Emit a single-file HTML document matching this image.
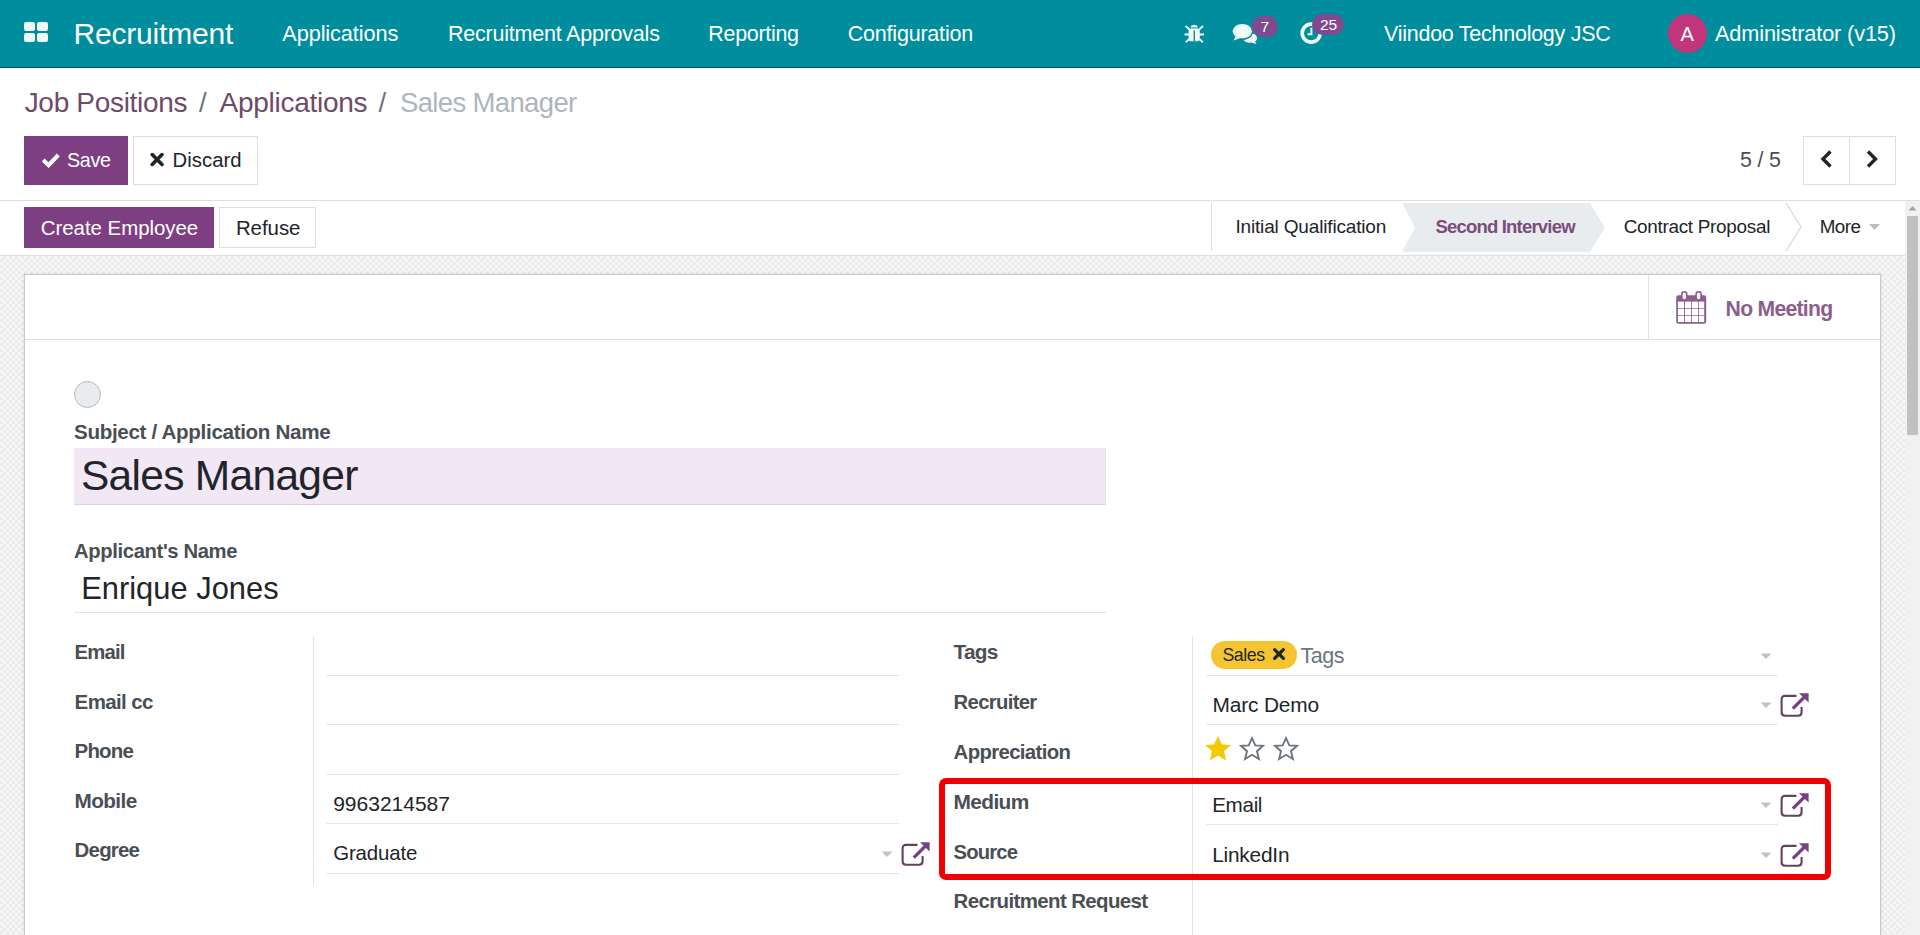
<!DOCTYPE html>
<html><head><meta charset="utf-8"><title>Recruitment - Sales Manager</title>
<style>
html,body{margin:0;padding:0;}
body{width:1920px;height:935px;overflow:hidden;position:relative;background:#fff;font-family:"Liberation Sans",sans-serif;}
.t{position:absolute;white-space:nowrap;line-height:1;}
svg{display:block;}
</style></head><body>
<div style="position:absolute;left:0px;top:0px;width:1920px;height:68px;background:#008d9e;"></div>
<div style="position:absolute;left:0px;top:67px;width:1920px;height:1px;background:#065b65;"></div>
<div style="position:absolute;left:24px;top:22px;width:11px;height:9px;background:#eef6f6;border-radius:2px;"></div>
<div style="position:absolute;left:37px;top:22px;width:11px;height:9px;background:#eef6f6;border-radius:2px;"></div>
<div style="position:absolute;left:24px;top:33px;width:11px;height:9px;background:#eef6f6;border-radius:2px;"></div>
<div style="position:absolute;left:37px;top:33px;width:11px;height:9px;background:#eef6f6;border-radius:2px;"></div>
<div class="t" style="left:73.50px;top:17px;line-height:33px;font-size:30.02px;color:#ffffff;letter-spacing:-0.192px;">Recruitment</div>
<div class="t" style="left:282.30px;top:21px;line-height:25px;font-size:21.73px;color:#ffffff;letter-spacing:-0.104px;">Applications</div>
<div class="t" style="left:448.00px;top:22px;line-height:24px;font-size:21.51px;color:#ffffff;letter-spacing:-0.220px;">Recruitment Approvals</div>
<div class="t" style="left:708.30px;top:22px;line-height:24px;font-size:21.44px;color:#ffffff;letter-spacing:-0.278px;">Reporting</div>
<div class="t" style="left:847.70px;top:22px;line-height:24px;font-size:21.53px;color:#ffffff;letter-spacing:-0.208px;">Configuration</div>
<div class="t" style="left:1384.00px;top:22px;line-height:24px;font-size:21.48px;color:#ffffff;letter-spacing:-0.242px;">Viindoo Technology JSC</div>
<div class="t" style="left:1715.00px;top:21px;line-height:25px;font-size:21.69px;color:#ffffff;letter-spacing:-0.121px;">Administrator (v15)</div>
<div style="position:absolute;left:1668px;top:14px;width:39px;height:39px;background:#c2357a;border-radius:50%;"></div>
<div class="t" style="left:1680.50px;top:23px;line-height:22px;font-size:20.15px;color:#ffffff;">A</div>
<svg style="position:absolute;left:1184px;top:23px" width="21" height="20" viewBox="0 0 21 20">
<g fill="#effafa"><path d="M6.2 4.5 A4.2 3.8 0 0 1 14.2 4.5 Z"/><rect x="4.6" y="5.4" width="11.2" height="12.9" rx="2.6"/>
<rect x="0.6" y="10.4" width="19.4" height="2.1"/></g>
<g stroke="#effafa" stroke-width="1.9" fill="none"><path d="M1.6 3 L5.6 6.8"/><path d="M19 3 L15 6.8"/><path d="M1.8 19.2 L5.6 15.6"/><path d="M18.8 19.2 L15 15.6"/></g>
<rect x="9.6" y="7.4" width="1.3" height="10.6" fill="#0f7884"/>
</svg>
<svg style="position:absolute;left:1232px;top:23px" width="27" height="22" viewBox="0 0 27 22">
<g fill="#effafa">
<path d="M17 12.5 Q22 9 24.5 13 Q26 16.5 23 18.5 L24.6 21 L19 19.6 Q14 20.5 11.5 17 Z"/>
</g>
<path d="M8.5 16.4 Q17.5 16.5 20.2 10.5" stroke="#0f7884" stroke-width="1.4" fill="none"/>
<g fill="#effafa">
<ellipse cx="10.3" cy="8.2" rx="9.6" ry="7.3"/><path d="M3.5 13 L1.8 17.6 L8.5 15 Z"/>
</g>
</svg>
<svg style="position:absolute;left:1300px;top:22px" width="23" height="23" viewBox="0 0 23 23">
<circle cx="11.2" cy="11.1" r="9" stroke="#effafa" stroke-width="3.6" fill="none"/>
<path d="M11.4 5.8 V12.2 H7.6" stroke="#effafa" stroke-width="2" fill="none"/>
</svg>
<div style="position:absolute;left:1251.5px;top:15.5px;width:26px;height:21px;background:#7f4a8f;border-radius:11px;"></div>
<div class="t" style="left:1260.60px;top:18px;line-height:17px;font-size:15.50px;color:#ffffff;">7</div>
<div style="position:absolute;left:1312px;top:14.3px;width:32px;height:21px;background:#7f4a8f;border-radius:11px;"></div>
<div class="t" style="left:1320.00px;top:16px;line-height:17px;font-size:15.50px;color:#ffffff;">25</div>
<div style="position:absolute;left:0px;top:68px;width:1920px;height:133px;background:#fff;"></div>
<div style="position:absolute;left:0px;top:200px;width:1920px;height:1px;background:#dedede;"></div>
<div class="t" style="left:24.70px;top:87px;line-height:31px;font-size:28.00px;color:#6f4a69;letter-spacing:-0.315px;">Job Positions</div>
<div class="t" style="left:199.00px;top:87px;line-height:31px;font-size:27.50px;color:#6c757d;">/</div>
<div class="t" style="left:219.50px;top:87px;line-height:31px;font-size:28.05px;color:#6f4a69;letter-spacing:-0.288px;">Applications</div>
<div class="t" style="left:378.60px;top:87px;line-height:31px;font-size:27.50px;color:#6c757d;">/</div>
<div class="t" style="left:400.00px;top:87px;line-height:31px;font-size:27.49px;color:#adb5bd;letter-spacing:-0.640px;">Sales Manager</div>
<div style="position:absolute;left:24px;top:136px;width:104px;height:49px;background:#7e3f82;"></div>
<svg style="position:absolute;left:41px;top:152px" width="20" height="16" viewBox="0 0 20 16"><path d="M2.2 8 L7.6 13.2 L17.3 3" stroke="#fff" stroke-width="4" fill="none" stroke-linejoin="miter"/></svg>
<div class="t" style="left:67.00px;top:149px;line-height:22px;font-size:19.75px;color:#ffffff;letter-spacing:-0.344px;">Save</div>
<div style="position:absolute;left:133px;top:136px;width:125px;height:49px;background:#fff;border:1px solid #dedede;box-sizing:border-box;"></div>
<svg style="position:absolute;left:150px;top:152px" width="15" height="15" viewBox="0 0 15 15"><path d="M2.2 2.6 L12 12.4 M12 2.6 L2.2 12.4" stroke="#1f2327" stroke-width="3.6" stroke-linecap="round" fill="none"/></svg>
<div class="t" style="left:172.50px;top:149px;line-height:22px;font-size:20.31px;color:#212529;letter-spacing:0.059px;">Discard</div>
<div class="t" style="left:1740.00px;top:148px;line-height:24px;font-size:21.44px;color:#4a4f54;letter-spacing:-0.176px;">5 / 5</div>
<div style="position:absolute;left:1803px;top:136px;width:93px;height:49px;background:#fff;border:1px solid #dedede;box-sizing:border-box;"></div>
<div style="position:absolute;left:1849px;top:136px;width:1px;height:49px;background:#dedede;"></div>
<svg style="position:absolute;left:1819px;top:149px" width="16" height="20" viewBox="0 0 16 20"><path d="M11.5 2.5 L4 10 L11.5 17.5" stroke="#212529" stroke-width="3.4" fill="none"/></svg>
<svg style="position:absolute;left:1864px;top:149px" width="16" height="20" viewBox="0 0 16 20"><path d="M4 2.5 L11.5 10 L4 17.5" stroke="#212529" stroke-width="3.4" fill="none"/></svg>
<div style="position:absolute;left:0px;top:201px;width:1905px;height:54px;background:#fff;"></div>
<div style="position:absolute;left:0px;top:255px;width:1905px;height:1px;background:#dedede;"></div>
<div style="position:absolute;left:24px;top:207px;width:190px;height:41px;background:#7e3f82;"></div>
<div class="t" style="left:40.70px;top:216px;line-height:23px;font-size:20.45px;color:#ffffff;letter-spacing:-0.026px;">Create Employee</div>
<div style="position:absolute;left:219px;top:207px;width:97px;height:41px;background:#fff;border:1px solid #dedede;box-sizing:border-box;"></div>
<div class="t" style="left:235.90px;top:216px;line-height:23px;font-size:20.44px;color:#212529;letter-spacing:-0.037px;">Refuse</div>
<div style="position:absolute;left:1211px;top:203px;width:1px;height:48px;background:#dedede;"></div>
<div class="t" style="left:1235.40px;top:216px;line-height:21px;font-size:19.05px;color:#212529;letter-spacing:-0.174px;">Initial Qualification</div>
<svg style="position:absolute;left:1400px;top:203px" width="210" height="50" viewBox="0 0 210 50"><path d="M2 0 L190 0 L205 24.5 L190 49 L2 49 L15 24.5 Z" fill="#e9ecef"/></svg>
<div class="t" style="left:1435.40px;top:216px;line-height:21px;font-size:18.50px;color:#7a4d7c;font-weight:700;letter-spacing:-0.800px;">Second Interview</div>
<div class="t" style="left:1623.75px;top:216px;line-height:21px;font-size:18.90px;color:#212529;letter-spacing:-0.289px;">Contract Proposal</div>
<svg style="position:absolute;left:1780px;top:201px" width="30" height="54" viewBox="0 0 30 54"><path d="M6 2 L21 26 L6 50" stroke="#d5d9dd" stroke-width="1.3" fill="none"/></svg>
<div class="t" style="left:1819.70px;top:216px;line-height:21px;font-size:18.80px;color:#212529;letter-spacing:-0.518px;">More</div>
<svg style="position:absolute;left:1868px;top:223px" width="13" height="8" viewBox="0 0 13 8"><path d="M1 1 L12 1 L6.5 7 Z" fill="#b8bcc0"/></svg>
<div style="position:absolute;left:0px;top:256px;width:1905px;height:679px;background-color:#f1f1f1;background-image:repeating-conic-gradient(#eaeaea 0 25%, #f7f7f7 0 50%);background-size:6px 6px;"></div>
<div style="position:absolute;left:1905px;top:201px;width:15px;height:734px;background:#f1f1f1;"></div>
<div style="position:absolute;left:1907px;top:216px;width:11px;height:219px;background:#c1c1c1;"></div>
<svg style="position:absolute;left:1907px;top:204px" width="11" height="8" viewBox="0 0 11 8"><path d="M1.5 6.5 L5.5 2 L9.5 6.5 Z" fill="#a3a3a3"/></svg>
<div style="position:absolute;left:24px;top:274px;width:1857px;height:700px;background:#fff;border:1px solid #c9c9c9;box-sizing:border-box;box-shadow:0 0 3px rgba(0,0,0,0.12);"></div>
<div style="position:absolute;left:25px;top:339px;width:1855px;height:1px;background:#dcdcdc;"></div>
<div style="position:absolute;left:1648px;top:275px;width:1px;height:64px;background:#e2e2e2;"></div>
<svg style="position:absolute;left:1676px;top:290px" width="31" height="34" viewBox="0 0 31 34">
<rect x="0.2" y="5.3" width="30" height="28.4" rx="2.2" fill="#8b5e8e"/>
<g fill="#fff">
<rect x="1.9" y="11.6" width="6.1" height="6.6"/><rect x="8.9" y="11.6" width="6.2" height="6.6"/><rect x="15.9" y="11.6" width="6.3" height="6.6"/><rect x="23" y="11.6" width="5.2" height="6.6"/>
<rect x="1.9" y="18.9" width="6.1" height="6.2"/><rect x="8.9" y="18.9" width="6.2" height="6.2"/><rect x="15.9" y="18.9" width="6.3" height="6.2"/><rect x="23" y="18.9" width="5.2" height="6.2"/>
<rect x="1.9" y="25.8" width="6.1" height="6.2"/><rect x="8.9" y="25.8" width="6.2" height="6.2"/><rect x="15.9" y="25.8" width="6.3" height="6.2"/><rect x="23" y="25.8" width="5.2" height="6.2"/>
</g>
<rect x="5.8" y="1.8" width="5" height="8.2" rx="2.5" fill="#fff" stroke="#8b5e8e" stroke-width="1.6"/>
<rect x="20.1" y="1.8" width="5" height="8.2" rx="2.5" fill="#fff" stroke="#8b5e8e" stroke-width="1.6"/>
</svg>
<div class="t" style="left:1725.60px;top:297px;line-height:23px;font-size:21.16px;color:#8b5e8e;font-weight:700;letter-spacing:-0.719px;">No Meeting</div>
<div style="position:absolute;left:74px;top:381px;width:27px;height:27px;background:#e9ecef;border:1.3px solid #b5b9bd;border-radius:50%;box-sizing:border-box;"></div>
<div class="t" style="left:74.00px;top:420px;line-height:23px;font-size:20.61px;color:#4a4f55;font-weight:700;letter-spacing:-0.331px;">Subject / Application Name</div>
<div style="position:absolute;left:74px;top:448px;width:1032px;height:57px;background:#f2e7f4;border-bottom:1px solid #d9d4da;border-right:1px solid #e6e0e8;box-sizing:border-box;"></div>
<div class="t" style="left:80.90px;top:452px;line-height:47px;font-size:42.51px;color:#212529;letter-spacing:-0.697px;">Sales Manager</div>
<div class="t" style="left:74.00px;top:540px;line-height:22px;font-size:20.26px;color:#4a4f55;font-weight:700;letter-spacing:-0.374px;">Applicant's Name</div>
<div class="t" style="left:81.20px;top:571px;line-height:35px;font-size:30.85px;color:#212529;letter-spacing:0.019px;">Enrique Jones</div>
<div style="position:absolute;left:74px;top:612px;width:1032px;height:1px;background:#e3e3e3;"></div>
<div class="t" style="left:74.60px;top:641px;line-height:22px;font-size:20.28px;color:#4a4f55;font-weight:700;letter-spacing:-0.810px;">Email</div>
<div class="t" style="left:74.60px;top:690px;line-height:23px;font-size:20.50px;color:#4a4f55;font-weight:700;letter-spacing:-0.633px;">Email cc</div>
<div class="t" style="left:74.60px;top:739px;line-height:23px;font-size:20.48px;color:#4a4f55;font-weight:700;letter-spacing:-0.842px;">Phone</div>
<div class="t" style="left:74.60px;top:789px;line-height:23px;font-size:20.74px;color:#4a4f55;font-weight:700;letter-spacing:-0.609px;">Mobile</div>
<div class="t" style="left:74.60px;top:839px;line-height:22px;font-size:20.42px;color:#4a4f55;font-weight:700;letter-spacing:-0.768px;">Degree</div>
<div style="position:absolute;left:313px;top:636px;width:1px;height:249px;background:#e3e3e3;"></div>
<div style="position:absolute;left:326px;top:675px;width:573px;height:1px;background:#e6e6e6;"></div>
<div style="position:absolute;left:326px;top:724px;width:573px;height:1px;background:#e6e6e6;"></div>
<div style="position:absolute;left:326px;top:774px;width:573px;height:1px;background:#e6e6e6;"></div>
<div style="position:absolute;left:326px;top:823px;width:573px;height:1px;background:#e6e6e6;"></div>
<div style="position:absolute;left:326px;top:873px;width:573px;height:1px;background:#e6e6e6;"></div>
<div class="t" style="left:333.20px;top:792px;line-height:23px;font-size:21.04px;color:#212529;letter-spacing:-0.021px;">9963214587</div>
<div class="t" style="left:333.20px;top:842px;line-height:22px;font-size:20.43px;color:#212529;letter-spacing:-0.126px;">Graduate</div>
<svg style="position:absolute;left:881px;top:851px" width="12" height="7" viewBox="0 0 12 7"><path d="M0.5 0.5 L11.5 0.5 L6 6 Z" fill="#bfc3c7"/></svg>
<svg style="position:absolute;left:900px;top:841px" width="31" height="26" viewBox="0 0 31 26">
<path d="M17.5 3.9 H6.1 Q2.6 3.9 2.6 7.4 V20.2 Q2.6 23.7 6.1 23.7 H19.1 Q22.6 23.7 22.6 20.2 V14.9" stroke="#65405f" stroke-width="2.1" fill="none"/>
<path d="M13.8 16.7 L26 4.5" stroke="#7a3f83" stroke-width="3.2" fill="none"/>
<path d="M20 1.3 H29.6 V10.5 Z" fill="#7a3f83"/>
</svg>
<div class="t" style="left:953.60px;top:640px;line-height:23px;font-size:20.74px;color:#4a4f55;font-weight:700;letter-spacing:-0.725px;">Tags</div>
<div class="t" style="left:953.60px;top:691px;line-height:22px;font-size:20.28px;color:#4a4f55;font-weight:700;letter-spacing:-0.665px;">Recruiter</div>
<div class="t" style="left:953.60px;top:741px;line-height:22px;font-size:20.36px;color:#4a4f55;font-weight:700;letter-spacing:-0.648px;">Appreciation</div>
<div class="t" style="left:953.60px;top:790px;line-height:23px;font-size:20.90px;color:#4a4f55;font-weight:700;letter-spacing:-0.662px;">Medium</div>
<div class="t" style="left:953.60px;top:841px;line-height:22px;font-size:20.23px;color:#4a4f55;font-weight:700;letter-spacing:-0.838px;">Source</div>
<div class="t" style="left:953.60px;top:889px;line-height:23px;font-size:20.47px;color:#4a4f55;font-weight:700;letter-spacing:-0.619px;">Recruitment Request</div>
<div style="position:absolute;left:1192px;top:636px;width:1px;height:300px;background:#e3e3e3;"></div>
<div style="position:absolute;left:1206px;top:675px;width:572px;height:1px;background:#e6e6e6;"></div>
<div style="position:absolute;left:1206px;top:724px;width:572px;height:1px;background:#e6e6e6;"></div>
<div style="position:absolute;left:1206px;top:824px;width:572px;height:1px;background:#e6e6e6;"></div>
<div style="position:absolute;left:1206px;top:874px;width:572px;height:1px;background:#e6e6e6;"></div>
<div style="position:absolute;left:1211px;top:641px;width:86px;height:28px;background:#f4c531;border-radius:14px;"></div>
<div class="t" style="left:1222.50px;top:645px;line-height:20px;font-size:17.73px;color:#212529;letter-spacing:-0.456px;">Sales</div>
<svg style="position:absolute;left:1272px;top:647px" width="14" height="14" viewBox="0 0 14 14"><path d="M2.6 2.6 L11.4 11.4 M11.4 2.6 L2.6 11.4" stroke="#1f2327" stroke-width="3.2" stroke-linecap="round" fill="none"/></svg>
<div class="t" style="left:1300.60px;top:644px;line-height:24px;font-size:21.50px;color:#6c757d;letter-spacing:-0.520px;">Tags</div>
<svg style="position:absolute;left:1760px;top:653px" width="12" height="7" viewBox="0 0 12 7"><path d="M0.5 0.5 L11.5 0.5 L6 6 Z" fill="#bfc3c7"/></svg>
<div class="t" style="left:1212.60px;top:693px;line-height:23px;font-size:20.85px;color:#212529;letter-spacing:-0.148px;">Marc Demo</div>
<svg style="position:absolute;left:1760px;top:702px" width="12" height="7" viewBox="0 0 12 7"><path d="M0.5 0.5 L11.5 0.5 L6 6 Z" fill="#bfc3c7"/></svg>
<svg style="position:absolute;left:1779px;top:692px" width="31" height="26" viewBox="0 0 31 26">
<path d="M17.5 3.9 H6.1 Q2.6 3.9 2.6 7.4 V20.2 Q2.6 23.7 6.1 23.7 H19.1 Q22.6 23.7 22.6 20.2 V14.9" stroke="#65405f" stroke-width="2.1" fill="none"/>
<path d="M13.8 16.7 L26 4.5" stroke="#7a3f83" stroke-width="3.2" fill="none"/>
<path d="M20 1.3 H29.6 V10.5 Z" fill="#7a3f83"/>
</svg>
<svg style="position:absolute;left:1205px;top:736px" width="27" height="26" viewBox="0 0 27 26"><polygon points="13,0 17,8.5 26,8.9 19,15 21.2,24.6 13,19.6 4.8,24.6 7,15 0,8.9 9,8.5"  fill="#f1cb00"/></svg>
<svg style="position:absolute;left:1239.4px;top:736.3px" width="27" height="26" viewBox="0 0 27 26"><polygon points="13,2.2 16.3,9.4 24,9.8 18,15.2 19.9,23 13,18.8 6.1,23 8,15.2 2,9.8 9.7,9.4"  fill="none" stroke="#6c757d" stroke-width="1.9" stroke-linejoin="miter"/></svg>
<svg style="position:absolute;left:1273.3px;top:736.3px" width="27" height="26" viewBox="0 0 27 26"><polygon points="13,2.2 16.3,9.4 24,9.8 18,15.2 19.9,23 13,18.8 6.1,23 8,15.2 2,9.8 9.7,9.4"  fill="none" stroke="#6c757d" stroke-width="1.9" stroke-linejoin="miter"/></svg>
<div class="t" style="left:1212.20px;top:793px;line-height:23px;font-size:20.67px;color:#212529;letter-spacing:-0.344px;">Email</div>
<svg style="position:absolute;left:1760px;top:802px" width="12" height="7" viewBox="0 0 12 7"><path d="M0.5 0.5 L11.5 0.5 L6 6 Z" fill="#bfc3c7"/></svg>
<svg style="position:absolute;left:1779px;top:792px" width="31" height="26" viewBox="0 0 31 26">
<path d="M17.5 3.9 H6.1 Q2.6 3.9 2.6 7.4 V20.2 Q2.6 23.7 6.1 23.7 H19.1 Q22.6 23.7 22.6 20.2 V14.9" stroke="#65405f" stroke-width="2.1" fill="none"/>
<path d="M13.8 16.7 L26 4.5" stroke="#7a3f83" stroke-width="3.2" fill="none"/>
<path d="M20 1.3 H29.6 V10.5 Z" fill="#7a3f83"/>
</svg>
<div class="t" style="left:1212.20px;top:843px;line-height:23px;font-size:20.84px;color:#212529;letter-spacing:-0.208px;">LinkedIn</div>
<svg style="position:absolute;left:1760px;top:852px" width="12" height="7" viewBox="0 0 12 7"><path d="M0.5 0.5 L11.5 0.5 L6 6 Z" fill="#bfc3c7"/></svg>
<svg style="position:absolute;left:1779px;top:842px" width="31" height="26" viewBox="0 0 31 26">
<path d="M17.5 3.9 H6.1 Q2.6 3.9 2.6 7.4 V20.2 Q2.6 23.7 6.1 23.7 H19.1 Q22.6 23.7 22.6 20.2 V14.9" stroke="#65405f" stroke-width="2.1" fill="none"/>
<path d="M13.8 16.7 L26 4.5" stroke="#7a3f83" stroke-width="3.2" fill="none"/>
<path d="M20 1.3 H29.6 V10.5 Z" fill="#7a3f83"/>
</svg>
<div style="position:absolute;left:939px;top:778px;width:892px;height:102px;border:6px solid #f00000;border-radius:7px;box-sizing:border-box;"></div>
</body></html>
